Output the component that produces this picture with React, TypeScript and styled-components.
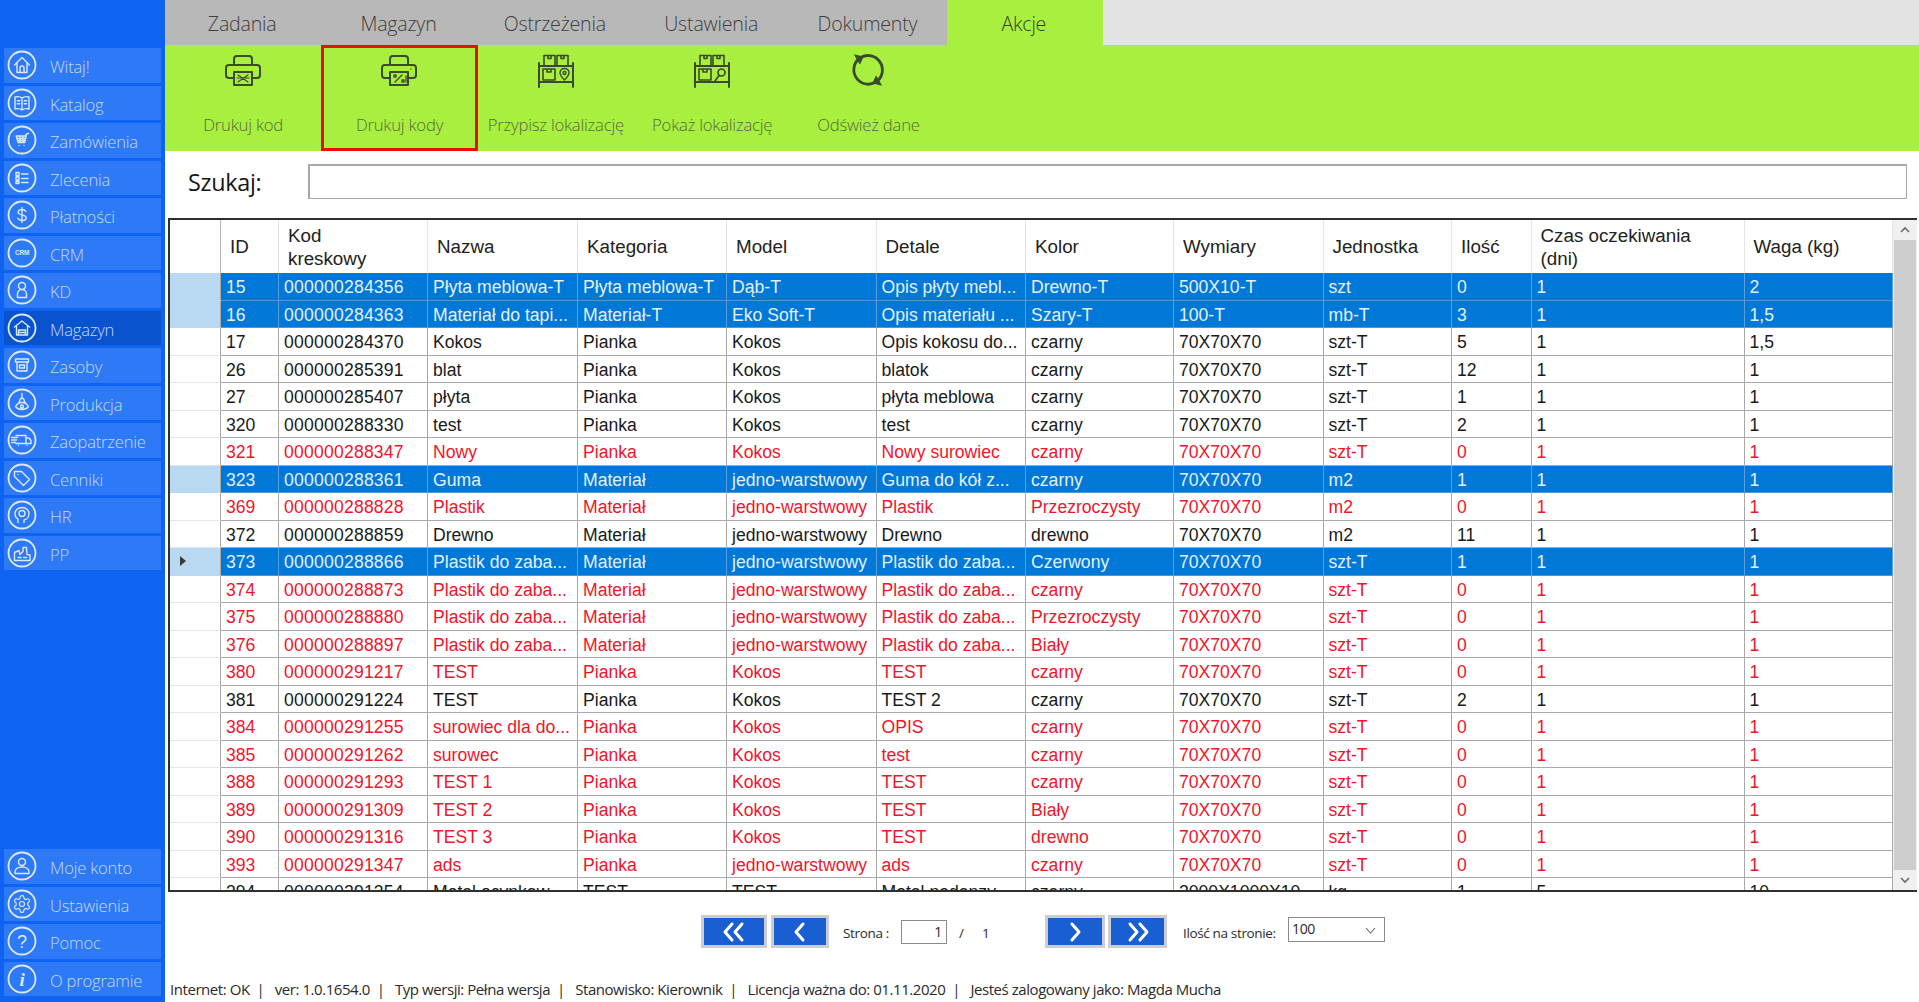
import React from "react";
import styled, { createGlobalStyle, css } from "styled-components";

const GlobalStyles = createGlobalStyle`
  html, body {
    margin: 0;
    padding: 0;
    height: 100%;
    background: #fff;
    overflow: hidden;
  }
  * { box-sizing: border-box; }
`;

const uiFont = `"Open Sans", "Noto Sans", sans-serif`;
const gridFont = `"Liberation Sans", Arial, sans-serif`;
const columns = "51px 58px 149px 150px 149px 149.5px 149.5px 148px 149.5px 128.5px 79.5px 213px 148px";

const Page = styled.div`
  display: flex;
  width: 1919px;
  height: 1002px;
  overflow: hidden;
`;

const Sidebar = styled.nav`
  width: 165px;
  flex: none;
  display: flex;
  flex-direction: column;
  gap: 3px;
  padding: 48px 4px 6px;
  background: #0e63f3;
`;

const NavItem = styled.div<{ $active?: boolean; $pushed?: boolean }>`
  height: 34.5px;
  flex: none;
  display: flex;
  align-items: center;
  padding-left: 3px;
  gap: 13px;
  color: #c4dbfb;
  font: 300 16.6px ${uiFont};
  letter-spacing: -0.2px;
  background: ${(p) => (p.$active ? "#0a53cf" : "#2e79f6")};
  ${(p) => p.$pushed && css`margin-top: auto;`}
`;

const NavLabel = styled.span`
  padding-top: 3px;
`;

const NavGlyph = styled.svg`
  width: 30px;
  height: 30px;
  flex: none;
  fill: none;
  stroke: #dbe9fd;
  stroke-width: 1.4;
  stroke-linecap: round;
  stroke-linejoin: round;
`;

const Main = styled.main`
  flex: 1;
  min-width: 0;
  display: flex;
  flex-direction: column;
`;

const TabBar = styled.div`
  height: 45px;
  flex: none;
  display: flex;
  background: #e3e3e3;
`;

const Tab = styled.div<{ $active?: boolean }>`
  width: 156.33px;
  display: flex;
  align-items: center;
  justify-content: center;
  padding: 2px 2px 0 0;
  font: 300 19.6px ${uiFont};
  letter-spacing: -0.2px;
  color: ${(p) => (p.$active ? "#34421f" : "#3e3e3e")};
  background: ${(p) => (p.$active ? "#a8ef3f" : "#b8b8b8")};
`;

const Ribbon = styled.div`
  height: 106px;
  flex: none;
  display: flex;
  background: #a8ef3f;
`;

const RibbonButton = styled.div<{ $marked?: boolean }>`
  width: 156.33px;
  display: flex;
  flex-direction: column;
  align-items: center;
  padding-top: 8px;
  color: #566c3e;
  font: 300 16.7px ${uiFont};
  letter-spacing: -0.22px;
  white-space: nowrap;
  outline: ${(p) => (p.$marked ? "3px solid #e60f0a" : "none")};
  outline-offset: -3px;
`;

const RibbonGlyph = styled.svg`
  width: 40px;
  height: 36px;
  flex: none;
  margin-bottom: 24px;
  fill: none;
  stroke: #3a4a2c;
  stroke-width: 2;
  stroke-linecap: round;
  stroke-linejoin: round;
`;

const SearchRow = styled.div`
  height: 67px;
  flex: none;
  display: flex;
  align-items: flex-start;
  padding: 13px 12px 0 23px;
`;

const SearchLabel = styled.label`
  width: 120px;
  flex: none;
  padding-top: 2px;
  font: 400 23.4px ${uiFont};
  letter-spacing: -0.3px;
  color: #151515;
`;

const SearchInput = styled.div`
  flex: 1;
  height: 35px;
  border: 2px solid #a8a8a8;
  border-right-width: 1px;
  border-bottom-width: 1px;
`;

const Frame = styled.div`
  height: 674px;
  flex: none;
  margin-left: 3px;
  margin-right: 2px;
  display: flex;
  border: 2px solid #2f2f2f;
  border-right: none;
  overflow: hidden;
`;

const Grid = styled.div`
  flex: 1;
  min-width: 0;
  overflow: hidden;
  font-family: ${gridFont};
`;

const HeaderRow = styled.div`
  display: grid;
  grid-template-columns: ${columns};
  height: 53px;
`;

const HeaderCell = styled.div`
  display: flex;
  align-items: center;
  padding: 2px 0 0 9px;
  border-right: 1px solid #e4e4e4;
  font-size: 18.8px;
  line-height: 22.5px;
  white-space: pre-line;
  color: #222;
`;

const HeaderCorner = styled(HeaderCell)`
  border-right-color: #b5b5b5;
`;

const Row = styled.div<{ $selected?: boolean; $alert?: boolean }>`
  display: grid;
  grid-template-columns: ${columns};
  height: 27.5px;
  font-size: 17.6px;
  color: ${(p) => (p.$selected ? "#e3f0fb" : p.$alert ? "#f2142b" : "#1a1a1a")};
`;

const Cell = styled.div<{ $selected?: boolean; $code?: boolean }>`
  display: flex;
  align-items: center;
  padding: 3px 0 0 5px;
  white-space: nowrap;
  overflow: hidden;
  letter-spacing: ${(p) => (p.$code ? "0.2px" : "normal")};
  background: ${(p) => (p.$selected ? "#0078d7" : "#fff")};
  border-right: 1px solid ${(p) => (p.$selected ? "#5c9fd8" : "#a9a9a9")};
  border-bottom: 1px solid ${(p) => (p.$selected ? "#4f97d4" : "#a9a9a9")};
`;

const RowHead = styled.div<{ $selected?: boolean }>`
  display: flex;
  align-items: center;
  padding-left: 10px;
  background: ${(p) => (p.$selected ? "#b9d8f2" : "#fff")};
  border-right: 1px solid #a9a9a9;
  border-bottom: 1px solid ${(p) => (p.$selected ? "#b9d8f2" : "#e6e6e6")};
`;

const Pointer = styled.span`
  width: 0;
  height: 0;
  border-style: solid;
  border-width: 5.5px 0 5.5px 6px;
  border-color: transparent transparent transparent #3a3a3a;
`;

const Scrollbar = styled.div`
  width: 24px;
  flex: none;
  display: flex;
  flex-direction: column;
  background: #f0f0f0;
`;

const ScrollArrow = styled.div`
  height: 20px;
  flex: none;
  display: flex;
  align-items: center;
  justify-content: center;
`;

const ScrollThumb = styled.div`
  flex: 1;
  margin: 0 1px;
  background: #cdcdcd;
`;

const Pager = styled.div`
  height: 79px;
  flex: none;
  display: flex;
  align-items: center;
  padding-left: 536px;
  font: 400 13.5px ${uiFont};
  letter-spacing: -0.35px;
  color: #2a2a2a;
`;

const PageButton = styled.div<{ $width: number; $gap: number }>`
  width: ${(p) => p.$width}px;
  margin-right: ${(p) => p.$gap}px;
  height: 33px;
  flex: none;
  display: flex;
  align-items: center;
  justify-content: center;
  border: 3px solid #c9ced6;
  background: #1a5fd1;
`;

const PageGlyph = styled.svg`
  width: 36px;
  height: 22px;
  fill: none;
  stroke: #fff;
  stroke-width: 3;
  stroke-linecap: round;
  stroke-linejoin: round;
`;

const PagerText = styled.span<{ $width: number }>`
  width: ${(p) => p.$width}px;
  flex: none;
  padding-top: 2px;
  white-space: nowrap;
`;

const PageInput = styled.div`
  width: 46px;
  height: 24px;
  flex: none;
  margin-right: 12px;
  padding-right: 4px;
  display: flex;
  align-items: center;
  justify-content: flex-end;
  border: 1px solid #8a8a8a;
  font-size: 14px;
`;

const PageSelect = styled.div`
  width: 97px;
  height: 25px;
  flex: none;
  margin-top: -4px;
  display: flex;
  align-items: flex-start;
  justify-content: space-between;
  padding: 1px 8px 0 3px;
  border: 1px solid #8a8a8a;
  font-size: 14px;
`;

const SelectChevron = styled.svg`
  width: 11px;
  height: 22px;
  fill: none;
  stroke: #666;
  stroke-width: 1.1;
`;

const StatusBar = styled.div`
  flex: 1;
  display: flex;
  align-items: flex-start;
  padding: 8px 0 0 5px;
  font: 400 15px ${uiFont};
  letter-spacing: -0.44px;
  white-space: pre;
  color: #2a2a2a;
`;

type NavEntry = { label: string; glyph: React.ReactNode; active?: boolean; pushed?: boolean };

const navEntries: NavEntry[] = [
  { label: "Witaj!", glyph: <path d="M7.500 15L15 7.500 22.500 15M10 13v9.500h10V13M13 22.500V18a2 2 0 0 1 4 0v4.500" /> },
  { label: "Katalog", glyph: <path d="M15 10c-2-1.500-4.500-1.700-7-1v12c2.500-.7 5-.5 7 1 2-1.500 4.500-1.700 7-1V9c-2.500-.7-5-.5-7 1zM15 10v12M10.300 12.800h2.500M10.300 15.800h2.500M17.200 12.800h2.500M17.200 15.800h2.500" /> },
  { label: "Zamówienia", glyph: <path d="M21.500 8.500l-2.300.6-1.500 8.400h-6.500l-2-6.500h10.200M12 20.500h.01M17 20.500h.01M10 13.500h8.800M10.700 15.500h7.700M13 11v6.500M16 11v6.500" /> },
  { label: "Zlecenia", glyph: <path d="M9 9.500h3v3H9zM9 14h3v3H9zM9 18.500h3v2H9zM14.500 11h6.500M14.500 15.500h6.500M14.500 19.500h6.500" /> },
  { label: "Płatności", glyph: <path d="M19 11.500c-.8-1.300-2.200-2-4-2-2.300 0-3.800 1.200-3.800 2.800 0 3.700 8 1.900 8 5.400 0 1.700-1.700 2.800-4.200 2.800-2 0-3.500-.8-4.200-2.200M15 7.500v15" /> },
  { label: "CRM", glyph: <text x="15" y="17.300" textAnchor="middle" fontFamily={gridFont} fontSize="6.500" fontWeight="700" fill="#dbe9fd" stroke="none">CRM</text> },
  { label: "KD", glyph: <path d="M15 7.500a3.500 3.500 0 1 0 0 7 3.500 3.500 0 0 0 0-7zM10.500 22.500v-3.500c0-2.500 2-4.500 4.500-4.500s4.500 2 4.500 4.500v3.500z" /> },
  { label: "Magazyn", active: true, glyph: <path d="M7.500 14L15 8l7.500 6M9.500 13v9h11v-9M11.500 22v-5h7v5M11.500 19.500h7" /> },
  { label: "Zasoby", glyph: <path d="M8.500 9h13v3h-13zM10 12v9h10v-9M12.500 15h5v3h-5z" /> },
  { label: "Produkcja", glyph: <path d="M15 5.500v5M13.500 10.500h3l1.500 4h-6zM8.500 18.500c1.500-2.500 4-4 6.500-4s5 1.500 6.500 4c-1.500 2-4 3-6.500 3s-5-1-6.500-3zM15 17a1.500 1.500 0 1 0 0 3 1.500 1.500 0 0 0 0-3z" /> },
  { label: "Zaopatrzenie", glyph: <path d="M9 10.500h10v8H9M19 13h3l2 2.500v3h-5M4.500 12.500h6M4.500 15h5M4.500 17.500h4M11.500 20.500h.01M20 20.500h.01" /> },
  { label: "Cenniki", glyph: <path d="M7.500 8.500h7l8 8-6 6-9-9zM11 11.500h.01" /> },
  { label: "HR", glyph: <path d="M11 22.500v-3.500c-2-1-3-3-3-5.500 0-3.500 3-6 7-6s7 2.500 7 6c0 3-2 6-5 6.500v2.500M15 10.500a3 3 0 1 0 0 6 3 3 0 0 0 0-6z" /> },
  { label: "PP", glyph: <path d="M7.500 22.500v-8l4.500-2 1 4 3-3v-4h3.500l.5 7 3 .5v5.500zM11 19.500h3M16.500 19.500h3" /> },
  { label: "Moje konto", pushed: true, glyph: <path d="M15 7.500a3.500 3.500 0 1 0 0 7 3.500 3.500 0 0 0 0-7zM8 22.500v-1.500c0-3 3-5 7-5s7 2 7 5v1.500z" /> },
  { label: "Ustawienia", glyph: (
    <g transform="translate(5 5) scale(.833)">
      <path d="M12.220 2h-.44a2 2 0 0 0-2 2v.18a2 2 0 0 1-1 1.730l-.43.25a2 2 0 0 1-2 0l-.15-.08a2 2 0 0 0-2.730.73l-.22.38a2 2 0 0 0 .73 2.730l.15.1a2 2 0 0 1 1 1.720v.51a2 2 0 0 1-1 1.740l-.15.09a2 2 0 0 0-.73 2.730l.22.38a2 2 0 0 0 2.730.73l.15-.08a2 2 0 0 1 2 0l.43.25a2 2 0 0 1 1 1.730V20a2 2 0 0 0 2 2h.44a2 2 0 0 0 2-2v-.18a2 2 0 0 1 1-1.730l.43-.25a2 2 0 0 1 2 0l.15.08a2 2 0 0 0 2.730-.73l.22-.39a2 2 0 0 0-.73-2.730l-.15-.08a2 2 0 0 1-1-1.740v-.5a2 2 0 0 1 1-1.740l.15-.09a2 2 0 0 0 .73-2.730l-.22-.38a2 2 0 0 0-2.730-.73l-.15.08a2 2 0 0 1-2 0l-.43-.25a2 2 0 0 1-1-1.730V4a2 2 0 0 0-2-2z" />
      <circle cx="12" cy="12" r="3" />
    </g>
  ) },
  { label: "Pomoc", glyph: <text x="15" y="21.500" textAnchor="middle" fontFamily={gridFont} fontSize="18" fontWeight="400" fill="#dbe9fd" stroke="none">?</text> },
  { label: "O programie", glyph: <text x="15" y="22" textAnchor="middle" fontFamily={`"Liberation Serif", serif`} fontSize="19" fontWeight="700" fontStyle="italic" fill="#dbe9fd" stroke="none">i</text> },
];

const printerBase = (
  <>
    <path d="M11 12V6a3 3 0 0 1 3-3h12a3 3 0 0 1 3 3v6" />
    <path d="M11 25H6a3 3 0 0 1-3-3v-7a3 3 0 0 1 3-3h28a3 3 0 0 1 3 3v7a3 3 0 0 1-3 3h-5" />
    <path d="M11 19h18v13H11z" />
  </>
);

const shelfBase = (
  <>
    <path d="M3 10v24M37 10v24M3 13h34M3 29h34" />
    <path d="M8 2.500h11V13H8zM21 2.500h11V13H21zM12 2.500v3h3v-3M25 2.500v3h3v-3M7 16h12v11H7zM11 16v3h4v-3" strokeWidth="1.600" />
  </>
);

const ribbonEntries: { label: string; glyph: React.ReactNode; marked?: boolean }[] = [
  { label: "Drukuj kod", glyph: <>{printerBase}<path d="M15 22l10 7M25 22l-10 7M14 25h12" strokeWidth="1.2" /></> },
  { label: "Drukuj kody", marked: true, glyph: <>{printerBase}<path d="M32 16h.01M16 29l7-7M15 22h2v2h-2zM23 27h2v2h-2zM27 23v6" strokeWidth="1.3" /></> },
  { label: "Przypisz lokalizację", glyph: <>{shelfBase}<path d="M28.500 15.500c-2.800 0-4.500 2-4.500 4.300 0 2.700 4.500 7.200 4.500 7.200s4.500-4.500 4.500-7.200c0-2.300-1.700-4.300-4.500-4.300zM28.500 18.500a1.500 1.500 0 1 0 0 3 1.500 1.500 0 0 0 0-3z" strokeWidth="1.4" /></> },
  { label: "Pokaż lokalizację", glyph: <>{shelfBase}<path d="M29.500 16a3.500 3.500 0 1 0 0 7 3.500 3.500 0 0 0 0-7zM27 22.500L23 28" strokeWidth="1.700" /></> },
  { label: "Odśwież dane", glyph: (
    <>
      <path d="M13 4.300A14.500 14.500 0 0 1 29.300 28.100" strokeWidth="2.800" />
      <path d="M27 29.600A14.500 14.500 0 0 1 10.700 5.900" strokeWidth="2.800" />
      <path d="M7 2l8 2-3 6.500zM33 32l-8-2 3-6.500z" fill="#3a4a2c" strokeWidth="1" />
    </>
  ) },
];

const tabLabels = ["Zadania", "Magazyn", "Ostrzeżenia", "Ustawienia", "Dokumenty", "Akcje"];
const headers = ["", "ID", "Kod\nkreskowy", "Nazwa", "Kategoria", "Model", "Detale", "Kolor", "Wymiary", "Jednostka", "Ilość", "Czas oczekiwania\n(dni)", "Waga (kg)"];

const jw = "jedno-warstwowy";
const cube = "70X70X70";

type RowState = "selected" | "alert" | "plain";
type DataRow = { state: RowState; pointer?: boolean; cells: string[] };

const rows: DataRow[] = [
  { state: "selected", cells: ["15", "000000284356", "Płyta meblowa-T", "Płyta meblowa-T", "Dąb-T", "Opis płyty mebl...", "Drewno-T", "500X10-T", "szt", "0", "1", "2"] },
  { state: "selected", cells: ["16", "000000284363", "Materiał do tapi...", "Materiał-T", "Eko Soft-T", "Opis materiału ...", "Szary-T", "100-T", "mb-T", "3", "1", "1,5"] },
  { state: "plain", cells: ["17", "000000284370", "Kokos", "Pianka", "Kokos", "Opis kokosu do...", "czarny", cube, "szt-T", "5", "1", "1,5"] },
  { state: "plain", cells: ["26", "000000285391", "blat", "Pianka", "Kokos", "blatok", "czarny", cube, "szt-T", "12", "1", "1"] },
  { state: "plain", cells: ["27", "000000285407", "płyta", "Pianka", "Kokos", "płyta meblowa", "czarny", cube, "szt-T", "1", "1", "1"] },
  { state: "plain", cells: ["320", "000000288330", "test", "Pianka", "Kokos", "test", "czarny", cube, "szt-T", "2", "1", "1"] },
  { state: "alert", cells: ["321", "000000288347", "Nowy", "Pianka", "Kokos", "Nowy surowiec", "czarny", cube, "szt-T", "0", "1", "1"] },
  { state: "selected", cells: ["323", "000000288361", "Guma", "Materiał", jw, "Guma do kół z...", "czarny", cube, "m2", "1", "1", "1"] },
  { state: "alert", cells: ["369", "000000288828", "Plastik", "Materiał", jw, "Plastik", "Przezroczysty", cube, "m2", "0", "1", "1"] },
  { state: "plain", cells: ["372", "000000288859", "Drewno", "Materiał", jw, "Drewno", "drewno", cube, "m2", "11", "1", "1"] },
  { state: "selected", pointer: true, cells: ["373", "000000288866", "Plastik do zaba...", "Materiał", jw, "Plastik do zaba...", "Czerwony", cube, "szt-T", "1", "1", "1"] },
  { state: "alert", cells: ["374", "000000288873", "Plastik do zaba...", "Materiał", jw, "Plastik do zaba...", "czarny", cube, "szt-T", "0", "1", "1"] },
  { state: "alert", cells: ["375", "000000288880", "Plastik do zaba...", "Materiał", jw, "Plastik do zaba...", "Przezroczysty", cube, "szt-T", "0", "1", "1"] },
  { state: "alert", cells: ["376", "000000288897", "Plastik do zaba...", "Materiał", jw, "Plastik do zaba...", "Biały", cube, "szt-T", "0", "1", "1"] },
  { state: "alert", cells: ["380", "000000291217", "TEST", "Pianka", "Kokos", "TEST", "czarny", cube, "szt-T", "0", "1", "1"] },
  { state: "plain", cells: ["381", "000000291224", "TEST", "Pianka", "Kokos", "TEST 2", "czarny", cube, "szt-T", "2", "1", "1"] },
  { state: "alert", cells: ["384", "000000291255", "surowiec dla do...", "Pianka", "Kokos", "OPIS", "czarny", cube, "szt-T", "0", "1", "1"] },
  { state: "alert", cells: ["385", "000000291262", "surowec", "Pianka", "Kokos", "test", "czarny", cube, "szt-T", "0", "1", "1"] },
  { state: "alert", cells: ["388", "000000291293", "TEST 1", "Pianka", "Kokos", "TEST", "czarny", cube, "szt-T", "0", "1", "1"] },
  { state: "alert", cells: ["389", "000000291309", "TEST 2", "Pianka", "Kokos", "TEST", "Biały", cube, "szt-T", "0", "1", "1"] },
  { state: "alert", cells: ["390", "000000291316", "TEST 3", "Pianka", "Kokos", "TEST", "drewno", cube, "szt-T", "0", "1", "1"] },
  { state: "alert", cells: ["393", "000000291347", "ads", "Pianka", jw, "ads", "czarny", cube, "szt-T", "0", "1", "1"] },
  { state: "plain", cells: ["394", "000000291354", "Metal ocynkow...", "TEST", "TEST", "Metal nadanzy...", "czarny", "2000X1000X10", "kg", "1", "5", "10"] },
];

const statusText =
  "Internet: OK  |   ver: 1.0.1654.0  |   Typ wersji: Pełna wersja  |   Stanowisko: Kierownik  |   Licencja ważna do: 01.11.2020  |   Jesteś zalogowany jako: Magda Mucha";

function App(): JSX.Element {
  return (
    <React.Fragment>
      <GlobalStyles />
      <Page>
        <Sidebar>
          {navEntries.map((entry) => (
            <NavItem key={entry.label} $active={entry.active} $pushed={entry.pushed}>
              <NavGlyph viewBox="0 0 30 30">
                <circle cx="15" cy="15" r="13.500" strokeWidth="1.8" />
                {entry.glyph}
              </NavGlyph>
              <NavLabel>{entry.label}</NavLabel>
            </NavItem>
          ))}
        </Sidebar>
        <Main>
          <TabBar>
            {tabLabels.map((label) => (
              <Tab key={label} $active={label === "Akcje"}>
                {label}
              </Tab>
            ))}
          </TabBar>
          <Ribbon>
            {ribbonEntries.map((entry) => (
              <RibbonButton key={entry.label} $marked={entry.marked}>
                <RibbonGlyph viewBox="0 0 40 36">{entry.glyph}</RibbonGlyph>
                {entry.label}
              </RibbonButton>
            ))}
          </Ribbon>
          <SearchRow>
            <SearchLabel>Szukaj:</SearchLabel>
            <SearchInput />
          </SearchRow>
          <Frame>
            <Grid>
              <HeaderRow>
                {headers.map((text, i) =>
                  i === 0 ? <HeaderCorner key={i} /> : <HeaderCell key={i}>{text}</HeaderCell>
                )}
              </HeaderRow>
              {rows.map((row) => {
                const selected = row.state === "selected";
                return (
                  <Row key={row.cells[0]} $selected={selected} $alert={row.state === "alert"}>
                    <RowHead $selected={selected}>{row.pointer && <Pointer />}</RowHead>
                    {row.cells.map((text, i) => (
                      <Cell key={i} $selected={selected} $code={i === 1}>
                        {text}
                      </Cell>
                    ))}
                  </Row>
                );
              })}
            </Grid>
            <Scrollbar>
              <ScrollArrow>
                <svg width="12" height="8" viewBox="0 0 12 8" fill="none" stroke="#6a6a6a" strokeWidth="1.6">
                  <path d="M2 6l4-4 4 4" />
                </svg>
              </ScrollArrow>
              <ScrollThumb />
              <ScrollArrow>
                <svg width="12" height="8" viewBox="0 0 12 8" fill="none" stroke="#6a6a6a" strokeWidth="1.6">
                  <path d="M2 2l4 4 4-4" />
                </svg>
              </ScrollArrow>
            </Scrollbar>
          </Frame>
          <Pager>
            <PageButton $width={66} $gap={4}>
              <PageGlyph viewBox="0 0 36 22">
                <path d="M16 3l-7 8 7 8M26 3l-7 8 7 8" />
              </PageGlyph>
            </PageButton>
            <PageButton $width={58} $gap={14}>
              <PageGlyph viewBox="0 0 36 22">
                <path d="M21 3l-7 8 7 8" />
              </PageGlyph>
            </PageButton>
            <PagerText $width={58}>Strona :</PagerText>
            <PageInput>1</PageInput>
            <PagerText $width={23}>/</PagerText>
            <PagerText $width={63}>1</PagerText>
            <PageButton $width={60} $gap={3}>
              <PageGlyph viewBox="0 0 36 22">
                <path d="M15 3l7 8-7 8" />
              </PageGlyph>
            </PageButton>
            <PageButton $width={59} $gap={16}>
              <PageGlyph viewBox="0 0 36 22">
                <path d="M10 3l7 8-7 8M20 3l7 8-7 8" />
              </PageGlyph>
            </PageButton>
            <PagerText $width={105}>Ilość na stronie:</PagerText>
            <PageSelect>
              100
              <SelectChevron viewBox="0 0 11 22">
                <path d="M1 9l4.500 5L10 9" />
              </SelectChevron>
            </PageSelect>
          </Pager>
          <StatusBar>{statusText}</StatusBar>
        </Main>
      </Page>
    </React.Fragment>
  );
}

export default App;
